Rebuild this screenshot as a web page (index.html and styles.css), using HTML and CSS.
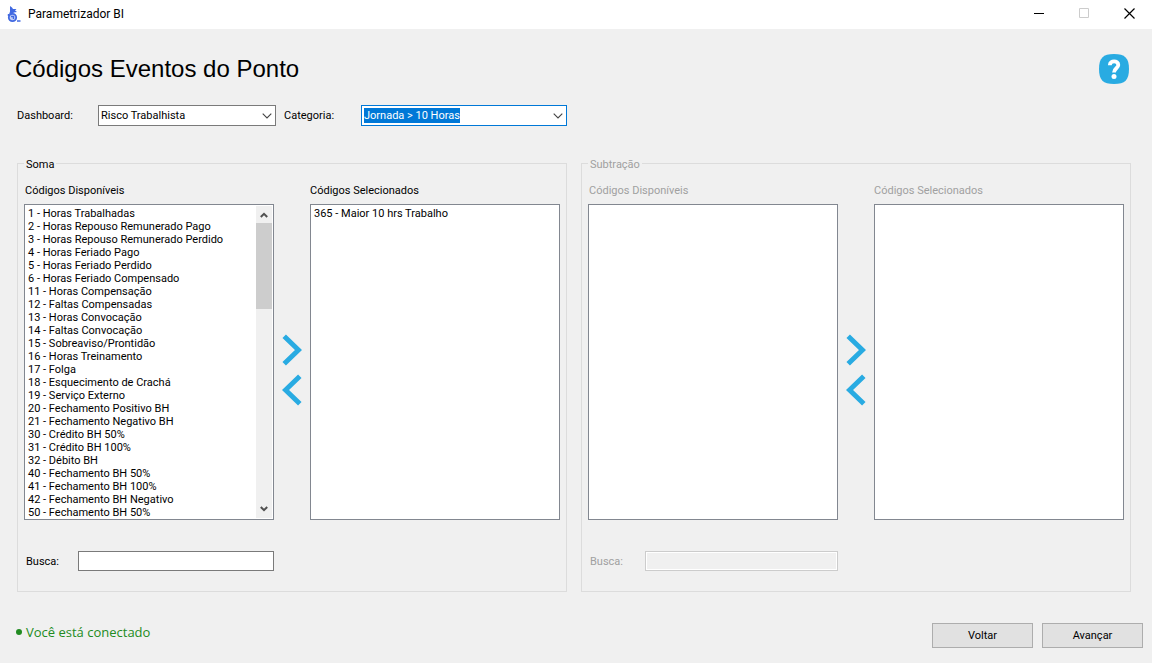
FILE: index.html
```html
<!DOCTYPE html>
<html lang="pt-BR">
<head>
<meta charset="utf-8">
<meta name="viewport" content="width=device-width, initial-scale=1">
<title>Parametrizador BI</title>
<link rel="stylesheet" href="styles.css">
</head>
<body>
<svg class="defs" aria-hidden="true">
  <symbol id="chevron-down" viewBox="0 0 10 6"><path d="M.7.7 5 5 9.300.7" fill="none" stroke="#444" stroke-width="1.100"/></symbol>
  <symbol id="move-right" viewBox="0 0 20 32"><path d="M2.200 2.200 16.500 16 2.200 29.800" fill="none" stroke="#29abe2" stroke-width="5"/></symbol>
  <symbol id="move-left" viewBox="0 0 20 32"><path d="M17.800 2.200 3.500 16 17.800 29.800" fill="none" stroke="#29abe2" stroke-width="5"/></symbol>
</svg>

<header class="titlebar">
  <svg class="app-icon" viewBox="0 0 14 18" aria-hidden="true">
    <path d="M3 1l2 1.500 1 1.500h3.500l-1.500 1.500 2 1.500-3 .5-3 2H2l1-3z" fill="#4169e1"/>
    <circle cx="5.500" cy="12.500" r="3.700" fill="#c3cff6" stroke="#4169e1" stroke-width="1.800"/>
    <path d="M4 11.500h2.500v2.500M1.500 9v2M10 16h3.500" fill="none" stroke="#4169e1" stroke-width="1.400"/>
  </svg>
  <span class="app-name">Parametrizador BI</span>
  <div class="window-controls">
    <button type="button" class="window-button" aria-label="Minimizar"><svg viewBox="0 0 11 11"><path d="M0 5.500h10" stroke="#000"/></svg></button>
    <button type="button" class="window-button" aria-label="Maximizar" disabled><svg viewBox="0 0 11 11"><path d="M.5.5h9v9h-9z" fill="none" stroke="#ccc"/></svg></button>
    <button type="button" class="window-button" aria-label="Fechar"><svg viewBox="0 0 11 11"><path d="M.5.5l10 10M10.500.5l-10 10" stroke="#000" stroke-width="1.200"/></svg></button>
  </div>
</header>

<main class="page">
  <div class="heading">
    <h1 class="title">Códigos Eventos do Ponto</h1>
    <button type="button" class="help" aria-label="Ajuda">
      <svg viewBox="0 0 30 30"><path d="M15 0C26 0 30 4 30 15S26 30 15 30 0 26 0 15 4 0 15 0z" fill="#29abe2"/><path d="M10.800 11.200C11 6 19.300 6.400 19.300 11c0 3.300-4.300 3.400-4.300 7.500" fill="none" stroke="#fff" stroke-width="3.800"/><circle cx="15" cy="22.500" r="2.500" fill="#fff"/></svg>
    </button>
  </div>

  <div class="filters">
    <label class="filter-label" for="dashboard">Dashboard:</label>
    <div class="combo combo-dashboard">
      <select id="dashboard"><option>Risco Trabalhista</option></select>
      <svg class="chevron" aria-hidden="true"><use href="#chevron-down"/></svg>
    </div>
    <label class="filter-label filter-category" for="categoria">Categoria:</label>
    <div class="combo combo-category">
      <select id="categoria"><option>Jornada &gt; 10 Horas</option></select>
      <svg class="chevron" aria-hidden="true"><use href="#chevron-down"/></svg>
    </div>
  </div>

  <div class="groups">
    <fieldset class="group">
      <legend>Soma</legend>
      <div class="transfer">
        <label class="list-label" for="soma-disponiveis">Códigos Disponíveis</label>
        <label class="list-label list-label-end" for="soma-selecionados">Códigos Selecionados</label>
        <div class="list">
          <select id="soma-disponiveis" multiple size="24">
            <option>1 - Horas Trabalhadas</option>
            <option>2 - Horas Repouso Remunerado Pago</option>
            <option>3 - Horas Repouso Remunerado Perdido</option>
            <option>4 - Horas Feriado Pago</option>
            <option>5 - Horas Feriado Perdido</option>
            <option>6 - Horas Feriado Compensado</option>
            <option>11 - Horas Compensação</option>
            <option>12 - Faltas Compensadas</option>
            <option>13 - Horas Convocação</option>
            <option>14 - Faltas Convocação</option>
            <option>15 - Sobreaviso/Prontidão</option>
            <option>16 - Horas Treinamento</option>
            <option>17 - Folga</option>
            <option>18 - Esquecimento de Crachá</option>
            <option>19 - Serviço Externo</option>
            <option>20 - Fechamento Positivo BH</option>
            <option>21 - Fechamento Negativo BH</option>
            <option>30 - Crédito BH 50%</option>
            <option>31 - Crédito BH 100%</option>
            <option>32 - Débito BH</option>
            <option>40 - Fechamento BH 50%</option>
            <option>41 - Fechamento BH 100%</option>
            <option>42 - Fechamento BH Negativo</option>
            <option>50 - Fechamento BH 50%</option>
          </select>
          <div class="scrollbar" aria-hidden="true">
            <svg viewBox="0 0 8 6"><path d="M.8 5 4 1.800 7.200 5" fill="none" stroke="#505050" stroke-width="2"/></svg>
            <div class="track"><div class="thumb"></div></div>
            <svg viewBox="0 0 8 6"><path d="M.8 1 4 4.200 7.200 1" fill="none" stroke="#505050" stroke-width="2"/></svg>
          </div>
        </div>
        <div class="moves">
          <button type="button" aria-label="Adicionar"><svg><use href="#move-right"/></svg></button>
          <button type="button" aria-label="Remover"><svg><use href="#move-left"/></svg></button>
        </div>
        <div class="list">
          <select id="soma-selecionados" multiple size="24"><option>365 - Maior 10 hrs Trabalho</option></select>
        </div>
        <div class="search">
          <label for="soma-busca">Busca:</label>
          <input id="soma-busca" type="text">
        </div>
      </div>
    </fieldset>

    <fieldset class="group group-disabled" disabled>
      <legend>Subtração</legend>
      <div class="transfer">
        <label class="list-label" for="sub-disponiveis">Códigos Disponíveis</label>
        <label class="list-label list-label-end" for="sub-selecionados">Códigos Selecionados</label>
        <div class="list"><select id="sub-disponiveis" multiple size="24"></select></div>
        <div class="moves">
          <button type="button" aria-label="Adicionar"><svg><use href="#move-right"/></svg></button>
          <button type="button" aria-label="Remover"><svg><use href="#move-left"/></svg></button>
        </div>
        <div class="list"><select id="sub-selecionados" multiple size="24"></select></div>
        <div class="search">
          <label for="sub-busca">Busca:</label>
          <input id="sub-busca" type="text">
        </div>
      </div>
    </fieldset>
  </div>
</main>

<footer class="footer">
  <p class="status"><span class="dot"></span>Você está conectado</p>
  <div class="actions">
    <button type="button" class="action">Voltar</button>
    <button type="button" class="action">Avançar</button>
  </div>
</footer>
</body>
</html>
```
FILE: styles.css
```css
* { box-sizing: border-box; }

body {
  margin: 0;
  min-height: 100vh;
  background: #f0f0f0;
  color: #000;
  font: 11px/13px Roboto, "Liberation Sans", sans-serif;
}

button, select, input { font: inherit; color: inherit; }
svg { display: block; }
.defs { display: none; }

.titlebar {
  display: flex;
  align-items: center;
  height: 29px;
  padding: 0 0 2px 7px;
  background: #fff;
}
.app-icon { width: 14px; height: 18px; }
.app-name {
  margin-left: 7px;
  font-size: 12px;
  line-height: 16px;
}
.window-controls { display: flex; margin-left: auto; }
.window-button {
  display: grid;
  place-items: center;
  width: 45px;
  height: 27px;
  padding: 0;
  border: 0;
  background: none;
}
.window-button svg { width: 11px; height: 11px; }

.page { padding: 25px 21px 0 17px; }

.heading {
  display: flex;
  align-items: center;
  justify-content: space-between;
  margin: 0 2px 0 -2px;
}
.title {
  margin: 0;
  font: 24px/30px "Liberation Sans", Arial, sans-serif;
}
.help { width: 30px; height: 30px; padding: 0; border: 0; background: none; }

.filters { display: flex; align-items: center; margin-top: 21px; }
.filter-label { width: 81px; }
.filter-category { width: 77px; margin-left: 8px; }
.combo {
  display: flex;
  align-items: center;
  justify-content: space-between;
  height: 21px;
  padding: 0 3px 0 2px;
  border: 1px solid #7a7a7a;
  background: #fff;
}
.combo select {
  appearance: none;
  height: 15px;
  padding: 0;
  border: 0;
  border-radius: 0;
  background: none;
}
.combo-dashboard { width: 178px; }
.combo-category { width: 206px; border-color: #0078d7; }
.combo-category select { background: #0078d7; color: #fff; }
.chevron { width: 10px; height: 6px; }

.groups {
  display: grid;
  grid-template-columns: 1fr 1fr;
  gap: 14px;
  margin-top: 30px;
}
.group {
  min-width: 0;
  margin: 0;
  padding: 13px 6px 20px;
  border: 1px solid #dcdcdc;
}
.group legend { padding: 2px 2px 0; }
.group-disabled { color: #a0a0a0; }

.transfer { display: grid; grid-template-columns: 1fr 36px 1fr; }
.list-label { padding-left: 1px; margin-bottom: 7px; }
.list-label-end { grid-column: 3; padding: 0; }
.list {
  display: flex;
  height: 316px;
  padding: 1px;
  border: 1px solid #828790;
  background: #fff;
}
.list select {
  flex: 1;
  min-width: 0;
  height: 100%;
  padding: 0;
  border: 0;
  border-radius: 0;
  background: #fff;
  overflow: hidden;
}
.list option { height: 13px; min-height: 13px; padding: 1px 2px 0; line-height: 13px; }
.scrollbar {
  display: flex;
  flex-direction: column;
  align-items: center;
  width: 16px;
  padding: 6px 0;
  background: #f0f0f0;
}
.scrollbar svg { width: 8px; height: 6px; }
.track { flex: 1; align-self: stretch; padding: 5px 0; }
.thumb { height: 86px; background: #cdcdcd; }

.moves {
  display: flex;
  flex-direction: column;
  align-items: center;
  justify-content: center;
  gap: 8px;
  padding-top: 16px;
}
.moves button { padding: 0; border: 0; background: none; }
.moves svg { width: 20px; height: 32px; }

.search {
  display: flex;
  align-items: center;
  justify-content: space-between;
  margin-top: 31px;
  padding-left: 2px;
}
.search input {
  width: 196px;
  height: 20px;
  padding: 0 3px;
  border: 1px solid #7a7a7a;
  background: #fff;
}
.search input:disabled {
  width: 193px;
  border-color: #ccc;
  background: #f0f0f0;
  box-shadow: inset 0 0 0 1px #fff;
}

.footer {
  display: flex;
  align-items: center;
  justify-content: space-between;
  padding: 31px 9px 15px 16px;
}
.status {
  display: flex;
  align-items: center;
  gap: 4px;
  margin: 0 0 7px;
  color: #228b22;
  font: 13px/18px "Open Sans", "Noto Sans", sans-serif;
}
.dot { width: 6px; height: 6px; border-radius: 50%; background: #228b22; }
.actions { display: flex; gap: 9px; }
.action {
  width: 101px;
  height: 25px;
  padding: 0;
  border: 1px solid #adadad;
  background: #e1e1e1;
}
```
